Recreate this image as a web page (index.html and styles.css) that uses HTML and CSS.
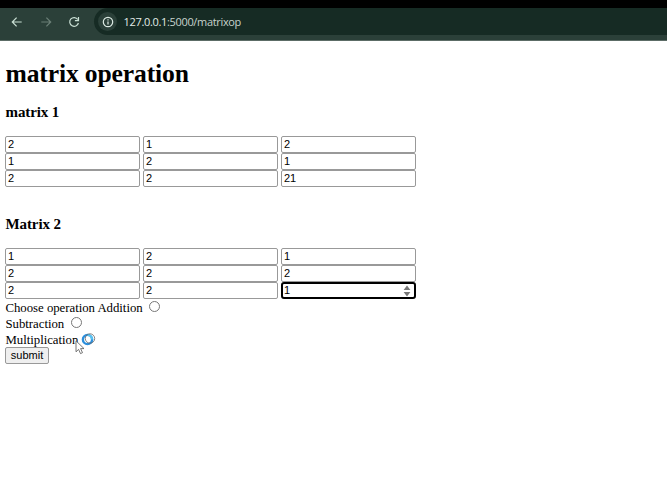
FILE: index.html
```
<!DOCTYPE html>
<html lang="en">
<head>
<meta charset="utf-8">
<title>matrix operation</title>
<link rel="stylesheet" href="styles.css">
</head>
<body>
<header class="browser">
  <nav class="toolbar">
    <svg class="nav" viewBox="0 0 12 12"><path d="M10.7 6H1.5M5.6 1.7L1.3 6l4.3 4.3"/></svg>
    <svg class="nav dim" viewBox="0 0 12 12"><path d="M1.3 6h9.2M6.4 1.7L10.7 6l-4.3 4.3"/></svg>
    <svg class="nav" viewBox="0 0 12 12"><path d="M9.8 3.5A4.4 4.4 0 1 0 10.4 7M10.5 1v3.6H6.9"/></svg>
    <div class="address">
      <span class="info"><svg viewBox="0 0 12 12"><circle cx="6" cy="6" r="4.7"/><path d="M6 5.4v3.2M6 3.3v1.2"/></svg></span>
      <span class="url">127.0.0.1<span class="path">:5000/matrixop</span></span>
    </div>
  </nav>
</header>
<main>
  <h1>matrix operation</h1>
  <h3>matrix 1</h3>
  <div class="matrix">
    <div class="cell">2</div><div class="cell">1</div><div class="cell">2</div>
    <div class="cell">1</div><div class="cell">2</div><div class="cell">1</div>
    <div class="cell">2</div><div class="cell">2</div><div class="cell">21</div>
  </div>
  <h3 class="second">Matrix 2</h3>
  <div class="matrix">
    <div class="cell">1</div><div class="cell">2</div><div class="cell">1</div>
    <div class="cell">2</div><div class="cell">2</div><div class="cell">2</div>
    <div class="cell">2</div><div class="cell">2</div>
    <div class="cell focused">1<svg class="spin" viewBox="0 0 8 12"><path d="M.6 5L4 .6 7.4 5zM.6 7h6.8L4 11.4z"/></svg></div>
  </div>
  <div class="option"><span class="label-add">Choose operation Addition</span><i class="radio"></i></div>
  <div class="option"><span class="label-sub">Subtraction</span><i class="radio"></i></div>
  <div class="option"><span class="label-mul">Multiplication</span><i class="radio"></i>
    <svg class="pointer" viewBox="0 0 24 24">
      <circle cx="12.5" cy="7.5" r="4.6" fill="none" stroke="#2d8fdc" stroke-width="2.4"/>
      <path d="M12.5 2.9A4.6 4.6 0 0 1 17.1 7.5" fill="none" stroke="#58c3f2" stroke-width="2.4"/>
      <circle cx="15" cy="6.5" r="4.7" fill="none" stroke="#666" stroke-width=".8"/>
      <path d="M1 8.8v11l2.6-2.4 1.9 4.2 2-.9-1.9-4.1H9z" fill="#fff" stroke="#555" stroke-width=".8"/>
    </svg>
  </div>
  <button class="submit" type="button">submit</button>
</main>
</body>
</html>
```
FILE: styles.css
```
* { box-sizing: border-box; }
body {
  margin: 0;
  background: #fff;
  color: #000;
  font: 12.8px/16px "Liberation Serif", serif;
}
.browser {
  height: 41px;
  padding-top: 8px;
  background: #000;
}
.toolbar {
  display: flex;
  height: 33px;
  padding-left: 11px;
  background: #2b4039;
  border-bottom: 1px solid #5c6c66;
}
.nav {
  width: 12px;
  height: 12px;
  margin: 8px 16.5px 0 0;
  fill: none;
  stroke: #c9dfd4;
  stroke-width: 1.2;
}
.dim { stroke: #6b7f77; }
.address {
  display: flex;
  flex: 1;
  align-items: center;
  height: 27px;
  margin-left: -2.5px;
  padding-left: 4px;
  border-radius: 14px 0 0 14px;
  background: #162b24;
}
.info {
  display: flex;
  align-items: center;
  justify-content: center;
  width: 19px;
  height: 19px;
  border-radius: 50%;
  background: #2b4039;
}
.info svg {
  width: 12px;
  height: 12px;
  fill: none;
  stroke: #dceae3;
  stroke-width: 1.2;
}
.url {
  margin-left: 6.5px;
  color: #e2ebe7;
  font: 11px/16px "Open Sans", sans-serif;
  letter-spacing: -.33px;
}
.path { color: #c6d3cd; }
main { padding: 18px 5px 0; }
h1 {
  margin: 0;
  padding-left: .5px;
  font-size: 25.6px;
  line-height: 30px;
  letter-spacing: -.14px;
}
h3 {
  margin: 14px 0 13px;
  padding-left: .5px;
  font-size: 15px;
  line-height: 19px;
  letter-spacing: -.1px;
}
.second { margin: 28px 0 14px; }
.matrix {
  display: grid;
  grid-template-columns: repeat(3, 135px);
  grid-auto-rows: 17px;
  column-gap: 3px;
}
.cell {
  display: flex;
  align-items: center;
  justify-content: space-between;
  padding: 0 4px 0 2px;
  border: 1px solid #999;
  border-radius: 2px;
  font: 11px/15px "Liberation Sans", sans-serif;
}
.matrix { margin-top: 0; }
h3 + .matrix { padding-top: .5px; }
.focused {
  padding: 0 3px 0 1px;
  border: 2px solid #000;
  border-radius: 3px;
}
.spin {
  width: 8px;
  height: 12px;
  fill: #777;
}
.option {
  position: relative;
  display: flex;
  height: 16px;
  padding: .5px 0 0 .5px;
  white-space: nowrap;
  letter-spacing: -.03px;
}
.label-add { width: 143px; }
.label-sub { width: 65px; }
.label-mul { width: 78px; }
.radio {
  width: 11px;
  height: 11px;
  margin-top: 1px;
  border: 1px solid #777;
  border-radius: 50%;
}
.pointer {
  position: absolute;
  left: 69.5px;
  top: .5px;
  width: 24px;
  height: 24px;
}
.label-mul + .radio { visibility: hidden; }
.submit {
  display: block;
  width: 44px;
  height: 17px;
  padding: 0 0 1px;
  border: 1px solid #999;
  border-radius: 2px;
  background: #efefef;
  color: #000;
  font: 11px/14px "Liberation Sans", sans-serif;
}
```
